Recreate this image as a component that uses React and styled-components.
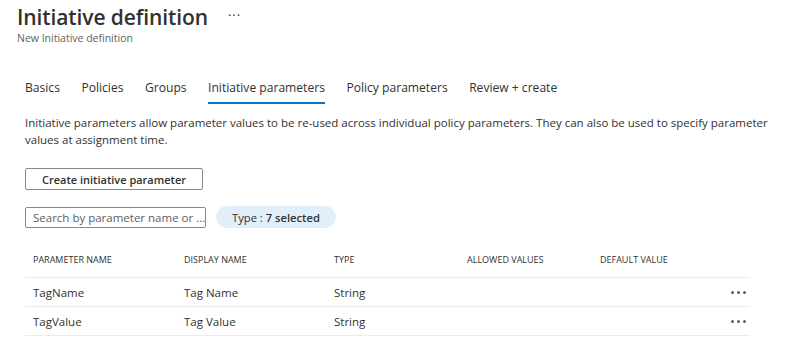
import styled, { createGlobalStyle } from "styled-components";

const GlobalStyle = createGlobalStyle`
  body {
    margin: 0;
    background: #fff;
    font-family: "Segoe UI", "Open Sans", "Noto Sans", sans-serif;
    color: #323130;
  }
`;

const Page = styled.div`
  width: 788px;
  height: 363px;
  overflow: hidden;
  padding: 0 0 0 17px;
  box-sizing: border-box;
`;

const TitleRow = styled.div`
  display: flex;
  align-items: center;
  gap: 20px;
  height: 32px;
  margin-top: 1px;
`;

const Title = styled.h1`
  margin: 0;
  font-size: 21px;
  font-weight: 600;
  letter-spacing: -0.1px;
  color: #323130;
`;

const More = styled.span`
  font-size: 13px;
  color: #323130;
  letter-spacing: 1px;
  margin-top: -4px;
`;

const Subtitle = styled.div`
  font-size: 10.5px;
  color: #605e5c;
  margin-top: -2px;
`;

const Body = styled.div`
  padding-left: 8px;
`;

const Tabs = styled.div`
  display: flex;
  gap: 21.5px;
  margin-top: 34px;
`;

const Tab = styled.div`
  font-size: 12.1px;
  color: #323130;
  padding-bottom: 6px;
  border-bottom: 2px solid ${({ $active }) => ($active ? "#0078d4" : "transparent")};
`;

const Description = styled.p`
  margin: 10px 0 0;
  font-size: 11.5px;
  line-height: 17px;
  width: 745px;
  color: #323130;
`;

const Button = styled.button`
  all: unset;
  box-sizing: border-box;
  margin-top: 20px;
  width: 178px;
  height: 22px;
  border: 1px solid #8a8886;
  border-radius: 2px;
  font-size: 11px;
  font-weight: 600;
  color: #323130;
  display: flex;
  align-items: center;
  justify-content: center;
`;

const FilterRow = styled.div`
  display: flex;
  align-items: center;
  gap: 10px;
  margin-top: 16px;
`;

const Search = styled.div`
  box-sizing: border-box;
  width: 181px;
  height: 21px;
  border: 1px solid #8a8886;
  border-radius: 2px;
  font-size: 11.5px;
  color: #605e5c;
  padding-left: 7px;
  display: flex;
  align-items: center;
  white-space: nowrap;
  overflow: hidden;
`;

const Pill = styled.div`
  height: 22px;
  width: 120px;
  border-radius: 11px;
  background: #e1effa;
  font-size: 11.2px;
  color: #323130;
  display: flex;
  align-items: center;
  justify-content: center;
  b {
    font-weight: 600;
    margin-left: 3px;
  }
`;

const Table = styled.div`
  margin-top: 13px;
  width: 725px;
`;

const Row = styled.div`
  display: grid;
  grid-template-columns: 151px 150px 133px 133px 1fr 30px;
  align-items: center;
  height: ${({ $head }) => ($head ? "36px" : "28px")};
  padding-left: 8px;
  border-bottom: 1px solid #edebe9;
  font-size: ${({ $head }) => ($head ? "9px" : "11.5px")};
  color: #323130;
  text-transform: ${({ $head }) => ($head ? "uppercase" : "none")};
`;

const Cell = styled.div`
  white-space: nowrap;
`;

const Dots = styled.div`
  display: flex;
  gap: 3px;
  justify-content: flex-end;
  padding-right: 4px;
  span {
    width: 3px;
    height: 3px;
    border-radius: 50%;
    background: #605e5c;
  }
`;

const rows = [
  ["TagName", "Tag Name", "String"],
  ["TagValue", "Tag Value", "String"],
];

export default function App() {
  return (
    <Page>
      <GlobalStyle />
      <TitleRow>
        <Title>Initiative definition</Title>
        <More>···</More>
      </TitleRow>
      <Subtitle>New Initiative definition</Subtitle>
      <Body>
        <Tabs>
          <Tab>Basics</Tab>
          <Tab>Policies</Tab>
          <Tab>Groups</Tab>
          <Tab $active>Initiative parameters</Tab>
          <Tab>Policy parameters</Tab>
          <Tab>Review + create</Tab>
        </Tabs>
        <Description>
          Initiative parameters allow parameter values to be re-used across individual policy
          parameters. They can also be used to specify parameter values at assignment time.
        </Description>
        <Button>Create initiative parameter</Button>
        <FilterRow>
          <Search>Search by parameter name or ...</Search>
          <Pill>
            Type : <b>7 selected</b>
          </Pill>
        </FilterRow>
        <Table>
          <Row $head>
            <Cell>Parameter name</Cell>
            <Cell>Display name</Cell>
            <Cell>Type</Cell>
            <Cell>Allowed values</Cell>
            <Cell>Default value</Cell>
            <Cell />
          </Row>
          {rows.map((r) => (
            <Row key={r[0]}>
              <Cell>{r[0]}</Cell>
              <Cell>{r[1]}</Cell>
              <Cell>{r[2]}</Cell>
              <Cell />
              <Cell />
              <Dots>
                <span />
                <span />
                <span />
              </Dots>
            </Row>
          ))}
        </Table>
      </Body>
    </Page>
  );
}
